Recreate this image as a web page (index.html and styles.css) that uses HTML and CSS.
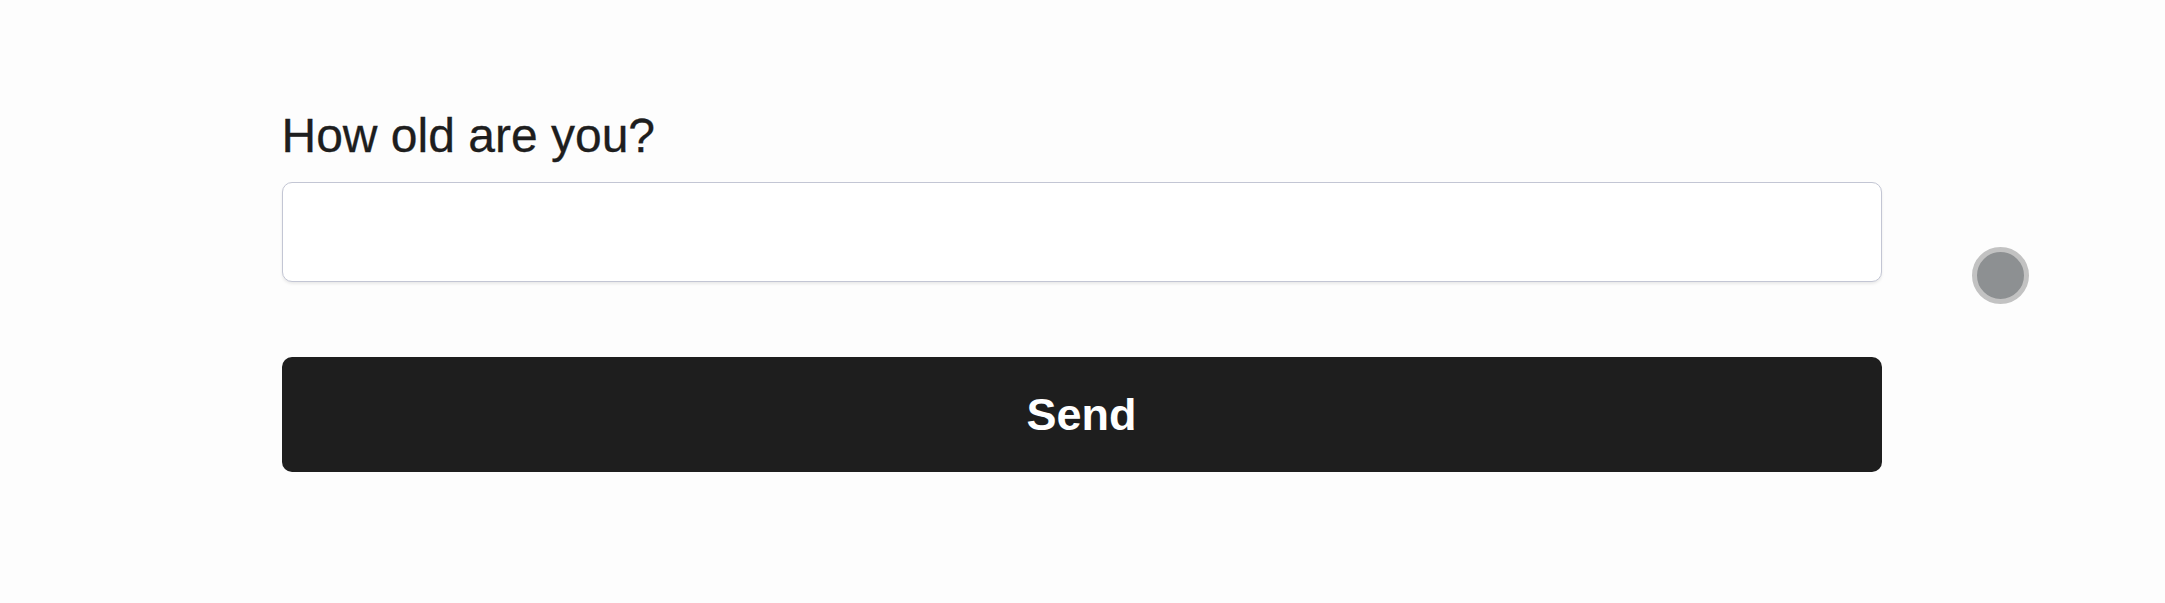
FILE: index.html
```html
<!DOCTYPE html>
<html lang="en">
<head>
<meta charset="utf-8">
<title>How old are you?</title>
<link rel="stylesheet" href="styles.css">
</head>
<body>
<main class="page">
  <form class="form">
    <label class="label" for="age">How old are you?</label>
    <input class="field" id="age" type="text">
    <button class="send" type="button">Send</button>
  </form>
  <div class="dot"></div>
</main>
</body>
</html>
```

FILE: styles.css
```css
html, body {
  margin: 0;
  padding: 0;
  background: #fdfdfd;
}
.page {
  position: relative;
  width: 2165px;
  height: 603px;
}
.form {
  width: 1600px;
  margin: 0 auto;
  padding-top: 108px;
  display: flex;
  flex-direction: column;
  box-sizing: border-box;
  transform: translateX(-1px);
}
.label {
  font-family: "Liberation Sans", Arial, sans-serif;
  font-size: 48px;
  line-height: 55px;
  color: #1e1e1e;
  -webkit-text-stroke: 0.3px #1e1e1e;
}
.field {
  margin-top: 19px;
  height: 100px;
  box-sizing: border-box;
  border: 1.5px solid #c3c6d4;
  border-radius: 10px;
  background: #ffffff;
  box-shadow: 0 2px 3px rgba(0, 0, 0, 0.08);
  font-family: "Liberation Sans", Arial, sans-serif;
  font-size: 40px;
  padding: 0 20px;
  outline: none;
}
.send {
  margin-top: 75px;
  height: 115px;
  border: none;
  border-radius: 10px;
  background: #1e1e1e;
  color: #ffffff;
  font-family: "Liberation Sans", Arial, sans-serif;
  font-weight: bold;
  font-size: 45px;
  cursor: pointer;
}
.dot {
  position: absolute;
  left: 1972px;
  top: 247px;
  width: 57px;
  height: 57px;
  box-sizing: border-box;
  border-radius: 50%;
  border: 5px solid #c2c2c2;
  background: #8d9092;
}
```
